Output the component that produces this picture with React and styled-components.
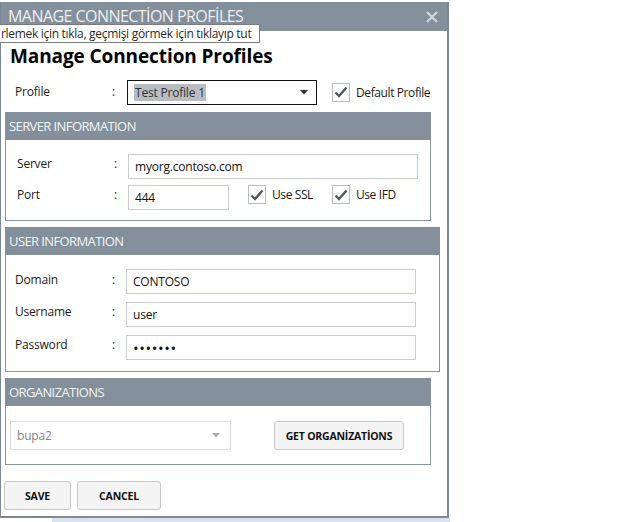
import React from "react";
import styled, { createGlobalStyle } from "styled-components";

const Global = createGlobalStyle`
  html, body { margin: 0; padding: 0; background: #fff; }
  body { font-family: "Open Sans", "Noto Sans", sans-serif; color: #1b1b1b; }
  * { box-sizing: border-box; }
`;

const Page = styled.div`
  position: relative;
  width: 619px;
  height: 522px;
  overflow: hidden;
  background: #ffffff;
  padding-top: 2px;
`;

const Dialog = styled.div`
  position: relative;
  width: 449px;
  height: 516px;
  border-left: 1px solid #7d8895;
  border-right: 2px solid #7d8895;
  border-bottom: 2px solid #7d8895;
  background: #fff;
  display: flex;
  flex-direction: column;
`;

const BackStrip = styled.div`
  margin-left: 52px;
  width: 398px;
  height: 4px;
  background: #dbe2eb;
`;

const TitleBar = styled.div`
  height: 29px;
  background: #838f9b;
  display: flex;
  align-items: center;
  justify-content: space-between;
  padding: 0 9px 0 7px;
`;

const TitleText = styled.div`
  color: #edf0f3;
  font-size: 16px;
  font-weight: 400;
  letter-spacing: -0.55px;
  line-height: 16px;
  margin-top: -1px;
`;

const Tooltip = styled.div`
  position: absolute;
  left: -2px;
  top: 22px;
  height: 19px;
  width: 261px;
  background: #fff;
  border: 1px solid #7b7b7b;
  font-size: 12px;
  line-height: 17px;
  color: #2a2a2a;
  white-space: nowrap;
  overflow: hidden;
  padding-left: 1px;
  letter-spacing: -0.3px;
`;

const Body = styled.div`
  padding: 12px 0 0 4px;
  display: flex;
  flex-direction: column;
`;

const Heading = styled.h1`
  margin: 0 0 0 5px;
  font-size: 19px;
  font-weight: 700;
  line-height: 26px;
  color: #000;
  letter-spacing: -0.1px;
`;

const ProfileRow = styled.div`
  display: flex;
  align-items: center;
  margin-top: 11px;
  height: 24px;
  padding-left: 10px;
`;

const Label = styled.div`
  width: ${(p) => p.$w || 97}px;
  font-size: 12px;
  line-height: 16px;
  color: #1b1b1b;
  padding-top: ${(p) => p.$pt || 0}px;
  letter-spacing: -0.2px;
`;

const Colon = styled.div`
  width: ${(p) => p.$w || 14}px;
  font-size: 12px;
  line-height: 16px;
  color: #1b1b1b;
  padding-top: ${(p) => p.$pt || 0}px;
`;

const ProfileSelect = styled.div`
  width: 190px;
  height: 25px;
  border: 1px solid #111;
  display: flex;
  align-items: center;
  justify-content: space-between;
  padding: 0 8px 0 6px;
  margin-left: 1px;
`;

const Highlight = styled.span`
  background: #b9bdc2;
  font-size: 12px;
  line-height: 17px;
  color: #333;
  padding: 0 1px;
  letter-spacing: -0.2px;
`;

const Arrow = ({ color = "#333" }) => (
  <svg width="8" height="5" viewBox="0 0 8 5">
    <path d="M0 0 L8 0 L4 4.5 Z" fill={color} />
  </svg>
);

const CheckWrap = styled.label`
  display: flex;
  align-items: center;
  gap: 6px;
  margin-left: ${(p) => p.$ml || 0}px;
  font-size: 12px;
  color: #1b1b1b;
  letter-spacing: -0.4px;
`;

const Box = styled.span`
  width: 18px;
  height: 19px;
  border: 1px solid #b7bcc1;
  background: #fff;
  display: flex;
  align-items: center;
  justify-content: center;
`;

const Check = ({ label, ml }) => (
  <CheckWrap $ml={ml}>
    <Box>
      <svg width="14" height="12" viewBox="0 0 14 12">
        <path d="M1.5 6.5 L5 10 L12.5 1.5" fill="none" stroke="#50575e" strokeWidth="2.4" />
      </svg>
    </Box>
    {label}
  </CheckWrap>
);

const Group = styled.section`
  width: ${(p) => p.$w}px;
  margin-top: ${(p) => p.$mt}px;
  border: 1px solid #8a949e;
  border-top: none;
  background: #fff;
`;

const GroupHeader = styled.div`
  height: ${(p) => p.$h || 28}px;
  background: #838f9b;
  color: #f3f5f7;
  font-size: 13px;
  font-weight: 500;
  line-height: ${(p) => p.$h || 28}px;
  padding-left: 4px;
  margin: 0 -1px;
  letter-spacing: -0.6px;
`;

const GroupBody = styled.div`
  display: flex;
  flex-direction: column;
  gap: ${(p) => p.$gap}px;
  padding: ${(p) => p.$pad};
`;

const FieldRow = styled.div`
  display: flex;
  align-items: flex-start;
`;

const TextInput = styled.input`
  width: ${(p) => p.$w}px;
  height: 25px;
  border: 1px solid #c9cdd1;
  padding: 0 6px;
  font-family: "Open Sans", "Noto Sans", sans-serif;
  font-size: 12px;
  color: #111;
  outline: none;
  background: #fff;
  letter-spacing: -0.2px;
  &[type="password"] { font-size: 15px; letter-spacing: 0.6px; }
`;

const OrgRow = styled.div`
  display: flex;
  align-items: center;
  justify-content: space-between;
  padding: 15px 26px 14px 4px;
`;

const OrgSelect = styled.div`
  width: 221px;
  height: 29px;
  border: 1px solid #dadcde;
  display: flex;
  align-items: center;
  justify-content: space-between;
  padding: 0 10px 0 6px;
  font-size: 12px;
  color: #80858a;
  letter-spacing: -0.2px;
`;

const Button = styled.button`
  width: ${(p) => p.$w}px;
  height: 29px;
  border: 1px solid #c8c8c8;
  border-radius: 3px;
  background: #f4f4f4;
  font-family: "Open Sans", "Noto Sans", sans-serif;
  font-size: 10.5px;
  font-weight: 700;
  color: #111;
  letter-spacing: -0.2px;
  padding: 0;
`;

const ButtonRow = styled.div`
  display: flex;
  gap: 6px;
  margin-top: 16px;
  margin-left: -1px;
`;

export default function App() {
  return (
    <>
      <Global />
      <Page>
        <Dialog>
          <TitleBar>
            <TitleText>MANAGE CONNECTİON PROFİLES</TitleText>
            <svg width="12" height="12" viewBox="0 0 12 12">
              <path d="M1 1 L11 11 M11 1 L1 11" stroke="#d3d7db" strokeWidth="2.2" />
            </svg>
          </TitleBar>
          <Tooltip>rlemek için tıkla, geçmişi görmek için tıklayıp tut</Tooltip>
          <Body>
            <Heading>Manage Connection Profiles</Heading>
            <ProfileRow>
              <Label>Profile</Label>
              <Colon $w={14}>:</Colon>
              <ProfileSelect>
                <Highlight>Test Profile 1</Highlight>
                <Arrow />
              </ProfileSelect>
              <Check label="Default Profile" ml={15} />
            </ProfileRow>

            <Group $w={426} $mt={8}>
              <GroupHeader>SERVER INFORMATION</GroupHeader>
              <GroupBody $gap={6} $pad="14px 0 10px 11px">
                <FieldRow>
                  <Label $pt={2}>Server</Label>
                  <Colon $pt={2}>:</Colon>
                  <TextInput readOnly defaultValue="myorg.contoso.com" $w={290} />
                </FieldRow>
                <FieldRow>
                  <Label $pt={2}>Port</Label>
                  <Colon $pt={2}>:</Colon>
                  <TextInput readOnly defaultValue="444" $w={101} />
                  <Check label="Use SSL" ml={19} />
                  <Check label="Use IFD" ml={19} />
                </FieldRow>
              </GroupBody>
            </Group>

            <Group $w={435} $mt={6}>
              <GroupHeader>USER INFORMATION</GroupHeader>
              <GroupBody $gap={8} $pad="14px 0 11px 9px">
                <FieldRow>
                  <Label $pt={3}>Domain</Label>
                  <Colon $pt={3}>:</Colon>
                  <TextInput readOnly defaultValue="CONTOSO" $w={290} />
                </FieldRow>
                <FieldRow>
                  <Label $pt={2}>Username</Label>
                  <Colon $pt={2}>:</Colon>
                  <TextInput readOnly defaultValue="user" $w={290} />
                </FieldRow>
                <FieldRow>
                  <Label $pt={2}>Password</Label>
                  <Colon $pt={2}>:</Colon>
                  <TextInput readOnly type="password" defaultValue="1234567" $w={290} />
                </FieldRow>
              </GroupBody>
            </Group>

            <Group $w={426} $mt={6}>
              <GroupHeader $h={28}>ORGANIZATIONS</GroupHeader>
              <OrgRow>
                <OrgSelect>
                  bupa2
                  <Arrow color="#a4a8ac" />
                </OrgSelect>
                <Button $w={130}>GET ORGANİZATİONS</Button>
              </OrgRow>
            </Group>

            <ButtonRow>
              <Button $w={67}>SAVE</Button>
              <Button $w={84}>CANCEL</Button>
            </ButtonRow>
          </Body>
        </Dialog>
        <BackStrip />
      </Page>
    </>
  );
}
